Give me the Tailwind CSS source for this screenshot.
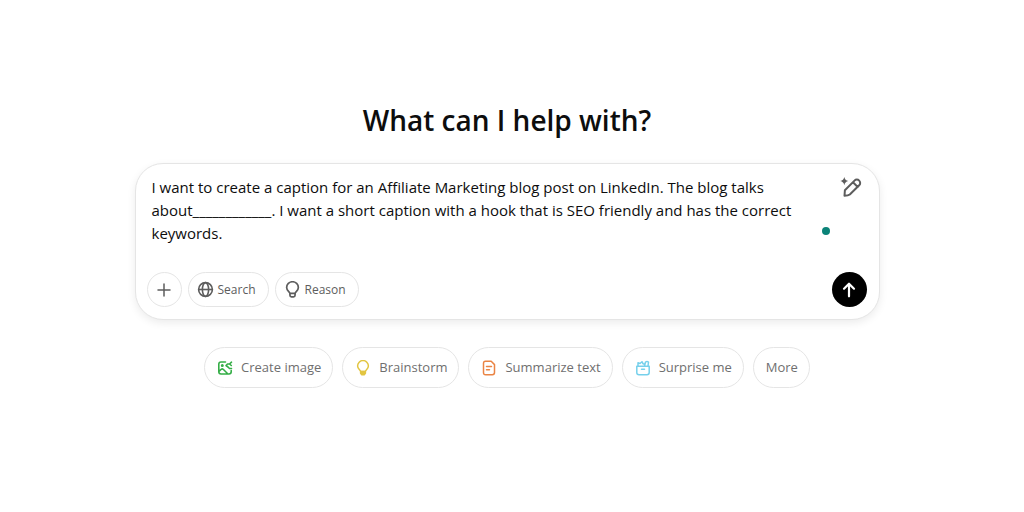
<!DOCTYPE html>
<html lang="en">
<head>
<meta charset="utf-8">
<meta name="viewport" content="width=device-width, initial-scale=1">
<title>What can I help with?</title>
<script src="https://cdn.jsdelivr.net/npm/@tailwindcss/browser@4"></script>
</head>
<body class="bg-white font-['Segoe_UI','Open_Sans',sans-serif] text-[#0d0d0d]">
<main class="flex flex-col items-center pt-[100px] pr-3 pl-0.5">
  <h1 class="text-[28px] leading-10 font-semibold">What can I help with?</h1>

  <form class="mt-[23px] w-full max-w-[745px] rounded-[28px] border border-[#e5e5e5] bg-white px-3 pt-3 pb-3 shadow-[0_3px_8px_rgba(0,0,0,0.08)]">
    <div class="relative flex items-start justify-between">
      <textarea aria-label="Message" rows="4" class="block h-[97px] w-full max-w-[656px] resize-none overflow-hidden bg-transparent pl-1 text-[15px] leading-[23px] outline-none">I want to create a caption for an Affiliate Marketing blog post on LinkedIn. The blog talks about____________. I want a short caption with a hook that is SEO friendly and has the correct keywords.</textarea>
      <button type="button" aria-label="Edit prompt" class="mr-1 text-[#5d5d5d]">
        <svg class="size-6" viewBox="0 0 24 24" fill="none" stroke="currentColor" stroke-width="2" stroke-linejoin="round" stroke-linecap="round"><path d="M5.500 19.700l.4-5.500L15.500 4.600a3.300 3.300 0 0 1 4.700 0 3.300 3.300 0 0 1 0 4.700L10.800 18.500Q9.300 19.700 5.500 19.700zM14 6.300l4.700 4.700"/><path fill="currentColor" stroke="none" d="M5.300 1Q6 4.400 9.200 5.100 6 5.800 5.300 9.200 4.600 5.800 1.400 5.100 4.600 4.400 5.300 1z"/></svg>
      </button>
      <span class="absolute top-[51px] right-[37px] size-2 rounded-full bg-[#0b8378]"></span>
    </div>
    <div class="-mt-px flex items-center gap-1.5 text-[12px] text-[#5d5d5d]">
      <button type="button" aria-label="Add" class="-ml-px flex size-[35px] items-center justify-center rounded-full border border-[#e5e5e5]">
        <svg class="size-4" viewBox="0 0 16 16" fill="none" stroke="currentColor" stroke-width="1.5" stroke-linecap="round"><path d="M8 2v12M2 8h12"/></svg>
      </button>
      <button type="button" class="flex h-[35px] items-center gap-1 rounded-full border border-[#e5e5e5] pr-3 pl-2 font-medium">
        <svg class="size-[17px]" viewBox="0 0 18 18" fill="none" stroke="currentColor" stroke-width="1.700"><circle cx="9" cy="9" r="7.300"/><ellipse cx="9" cy="9" rx="3.300" ry="7.300"/><path d="M1.700 9h14.600"/></svg>
        Search
      </button>
      <button type="button" class="flex h-[35px] items-center gap-1 rounded-full border border-[#e5e5e5] pr-3 pl-2 font-medium">
        <svg class="size-[17px]" viewBox="0 0 18 18" fill="none" stroke="currentColor" stroke-width="1.800"><path d="M6.300 13.200C6 11.500 2.800 10.500 2.800 7a6.200 6.200 0 0 1 12.400 0c0 3.500-3.200 4.500-3.500 6.200z"/><path d="M6.300 13.200v2q0 1.600 1.600 1.600h2.200q1.600 0 1.600-1.600v-2"/></svg>
        Reason
      </button>
      <button type="submit" aria-label="Send" class="ml-auto flex size-[35px] items-center justify-center rounded-full bg-black text-white">
        <svg class="size-5" viewBox="0 0 20 20" fill="none" stroke="currentColor" stroke-width="2.200" stroke-linecap="round" stroke-linejoin="round"><path d="M10 16.300v-12M5 8.700l5-5 5 5"/></svg>
      </button>
    </div>
  </form>

  <div class="mt-[27px] flex flex-wrap justify-center gap-[9px] text-[13px] text-[#6f6f6f]">
    <button type="button" class="flex h-[41px] items-center gap-2 rounded-full border border-[#e5e5e5] pr-[11px] pl-3">
      <svg class="size-4 text-[#35ae47]" viewBox="0 0 16 16" fill="none" stroke="currentColor" stroke-width="1.600" stroke-linecap="round" stroke-linejoin="round"><path d="M8.500 2H4Q1.800 2 1.800 4.200v7.600Q1.800 14 4 14h8q2.200 0 2.200-2.200V10.500M2 11.500l2.200-2.200q1-.9 2 0l4.500 4.500M14.500 2.200l-2 1.800H10.500L9 5.500l2 1.500 1.500 1.500h2M12.500 4l1.800 1.500"/><circle cx="5.300" cy="5.500" r=".7" fill="currentColor"/></svg>
      Create image
    </button>
    <button type="button" class="flex h-[41px] items-center gap-2 rounded-full border border-[#e5e5e5] pr-[11px] pl-3">
      <svg class="size-4 text-[#e2c541]" viewBox="0 0 16 16" fill="none" stroke="currentColor" stroke-width="1.500" stroke-linejoin="round"><path d="M5.600 11.500C5.500 10 2.600 9 2.600 6a5.400 5.400 0 0 1 10.800 0c0 3-2.900 4-3 5.500z"/><path fill="currentColor" d="M5.600 11.500h4.800v1.800l-1.200 1.500H6.800l-1.200-1.500z"/></svg>
      Brainstorm
    </button>
    <button type="button" class="flex h-[41px] items-center gap-2 rounded-full border border-[#e5e5e5] pr-[11px] pl-3">
      <svg class="size-4 text-[#ea8444]" viewBox="0 0 16 16" fill="none" stroke="currentColor" stroke-width="1.500" stroke-linecap="round" stroke-linejoin="round"><path d="M4.500 1.300h5.700l3.300 3.300v8q0 2.200-2.200 2.200H4.700q-2.200 0-2.200-2.200V3.500q0-2.200 2-2.200zM5.500 6.500h5M5.500 9.700h3"/></svg>
      Summarize text
    </button>
    <button type="button" class="flex h-[41px] items-center gap-2 rounded-full border border-[#e5e5e5] pr-[11px] pl-3">
      <svg class="size-4 text-[#76d0eb]" viewBox="0 0 16 16" fill="none" stroke="currentColor" stroke-width="1.500" stroke-linecap="round" stroke-linejoin="round"><path d="M1.800 6.200h12.400v6.300q0 2.200-2.200 2.200H4q-2.200 0-2.200-2.200zM6.500 9.300h3M3 6V2.800l2 .7L7 1.700l1 2 1.700.5M9.500 6l1-4q1.500-1 3 0L13 6"/></svg>
      Surprise me
    </button>
    <button type="button" class="flex h-[41px] items-center rounded-full border border-[#e5e5e5] pr-[11px] pl-3">More</button>
  </div>
</main>
</body>
</html>
